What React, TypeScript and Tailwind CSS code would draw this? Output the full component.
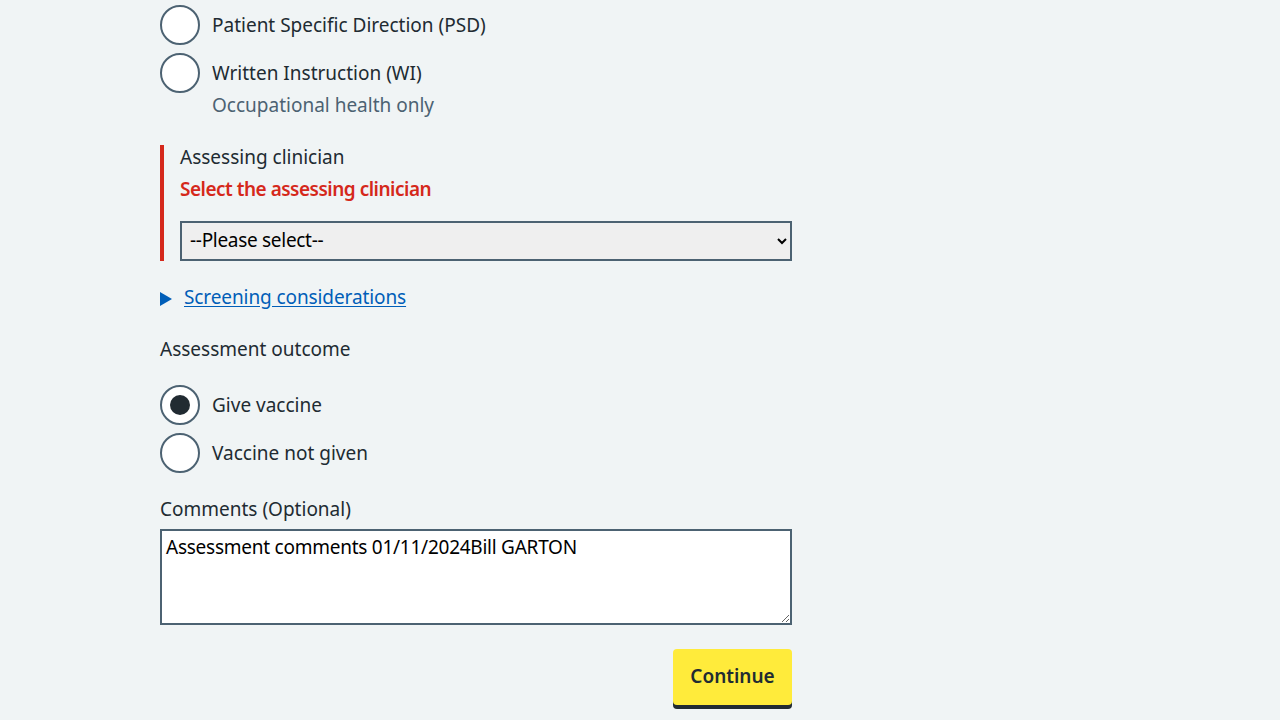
import React from "react";

const font = { fontFamily: '"Noto Sans", "Open Sans", Arial, sans-serif' };

function Radio({ label, checked }: { label: string; checked?: boolean }) {
  return (
    <div className="flex h-10 items-center gap-3">
      <span className="flex h-10 w-10 shrink-0 items-center justify-center rounded-full border-2 border-[#4c6272] bg-white">
        {checked && <span className="h-5 w-5 rounded-full bg-[#212b32]" />}
      </span>
      <span className="text-[19px] leading-7 text-[#212b32]">{label}</span>
    </div>
  );
}

export default function App() {
  return (
    <div className="min-h-screen bg-[#f0f4f5]" style={font}>
      <div className="ml-[160px] w-[632px] pt-[5px]">
        <div className="flex flex-col gap-2">
          <Radio label="Patient Specific Direction (PSD)" />
          <div>
            <Radio label="Written Instruction (WI)" />
            <p className="-mt-[2px] pl-[52px] text-[19px] leading-7 text-[#4c6272]">
              Occupational health only
            </p>
          </div>
        </div>

        <div className="mt-[26px] border-l-4 border-[#d5281b] pl-4">
          <p className="text-[19px] leading-6 text-[#212b32]">Assessing clinician</p>
          <p className="mt-2 text-[19px] font-semibold leading-6 tracking-[-0.5px] text-[#d5281b]">
            Select the assessing clinician
          </p>
          <select
            className="mt-5 block h-10 w-full border-2 border-[#4c6272] bg-[#efefef] px-1 pb-[3px] text-[19px] tracking-[-0.3px] text-black"
            style={font}
            defaultValue=""
          >
            <option value="">--Please select--</option>
          </select>
        </div>

        <div className="mt-[22px] flex h-7 items-center gap-3">
          <svg width="12" height="14" viewBox="0 0 12 14" className="mt-[3px]">
            <path d="M0 0 L12 7 L0 14 Z" fill="#005eb8" />
          </svg>
          <a href="#" className="text-[19px] leading-7 tracking-[-0.1px] text-[#005eb8] underline underline-offset-2">
            Screening considerations
          </a>
        </div>

        <p className="mt-6 text-[19px] leading-7 text-[#212b32]">Assessment outcome</p>

        <div className="mt-[22px] flex flex-col gap-2">
          <Radio label="Give vaccine" checked />
          <Radio label="Vaccine not given" />
        </div>

        <p className="mt-[22px] text-[19px] leading-7 text-[#212b32]">Comments (Optional)</p>
        <textarea
          className="mt-[6px] block h-24 w-full resize-y border-2 border-[#4c6272] bg-white px-1 pt-[4px] text-[19px] leading-6 tracking-[-0.25px] text-black"
          style={font}
          defaultValue="Assessment comments 01/11/2024Bill GARTON"
        />

        <div className="mt-6 flex justify-end">
          <button className="h-14 w-[119px] rounded-[4px] bg-[#ffeb3b] pb-[2px] text-[19px] font-semibold text-[#212b32] shadow-[0_4px_0_#212b32]">
            Continue
          </button>
        </div>
      </div>
    </div>
  );
}
